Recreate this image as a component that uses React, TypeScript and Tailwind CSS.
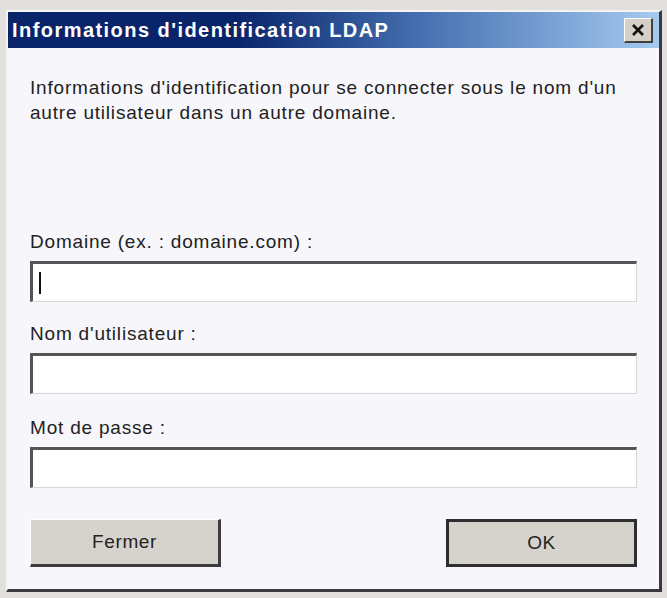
import React from 'react'

const font = { fontFamily: '"Liberation Sans", Arial, sans-serif' }

const Field = ({ label, caret, className = '' }: { label: string; caret?: boolean; className?: string }) => (
  <div className={`flex flex-col ${className}`}>
    <label className="text-[19px] leading-[22px] tracking-[0.8px] text-[#222] mb-[8px]">{label}</label>
    <div className="h-[41px] bg-white border-t-[3px] border-l-[3px] border-r border-b border-t-[#555] border-l-[#555] border-r-[#d6d6d6] border-b-[#d6d6d6] flex items-center pl-[6px]">
      {caret && <div className="w-[2px] h-[22px] bg-[#111]" />}
    </div>
  </div>
)

export default function App() {
  return (
    <div className="w-[667px] h-[598px] bg-[#e2dfdc] pt-[10px] pl-[6px] pr-[5px] pb-[6px]" style={font}>
      <div className="h-full flex flex-col bg-[#f7f7fb] border-l-2 border-t-2 border-l-[#f4f4f4] border-t-[#f4f4f4] border-r-[3px] border-b-[3px] border-r-[#3a3a3a] border-b-[#3a3a3a]">
        {/* Title bar */}
        <div className="h-[36px] flex items-center justify-between pl-[4px] pr-[6px] bg-gradient-to-r from-[#0a246a] from-[35%] via-[#4a74b4] via-[65%] to-[#a6caf0]">
          <span className="text-white font-bold text-[20px] tracking-[1.45px]">Informations d'identification LDAP</span>
          <button className="w-[29px] h-[25px] bg-[#d4d0c8] border-t border-l border-t-white border-l-white border-r-2 border-b-2 border-r-[#404040] border-b-[#404040] flex items-center justify-center">
            <svg width="14" height="12" viewBox="0 0 14 12">
              <path d="M2 1 L12 11 M12 1 L2 11" stroke="#111" strokeWidth="2.6" />
            </svg>
          </button>
        </div>

        {/* Body */}
        <div className="flex-1 flex flex-col px-[22px] pt-[27px]">
          <p className="text-[19px] leading-[25px] tracking-[0.8px] text-[#222]">
            Informations d'identification pour se connecter sous le nom d'un autre utilisateur dans un autre domaine.
          </p>

          <div className="flex flex-col mt-[106px]">
            <Field label="Domaine (ex. : domaine.com) :" caret />
            <Field label="Nom d'utilisateur :" className="mt-[21px]" />
            <Field label="Mot de passe :" className="mt-[23px]" />
          </div>

          <div className="flex justify-between mt-[31px]">
            <button className="w-[191px] h-[48px] bg-[#d6d3cd] text-[19px] tracking-[0.6px] text-[#222] border-t border-l border-t-white border-l-white border-r-[3px] border-b-[3px] border-r-[#3c3c3c] border-b-[#3c3c3c]">
              Fermer
            </button>
            <button className="w-[191px] h-[48px] bg-[#d6d3cd] text-[19px] tracking-[0.6px] text-[#222] border-[3px] border-[#2e2e2e]">
              OK
            </button>
          </div>
        </div>
      </div>
    </div>
  )
}
